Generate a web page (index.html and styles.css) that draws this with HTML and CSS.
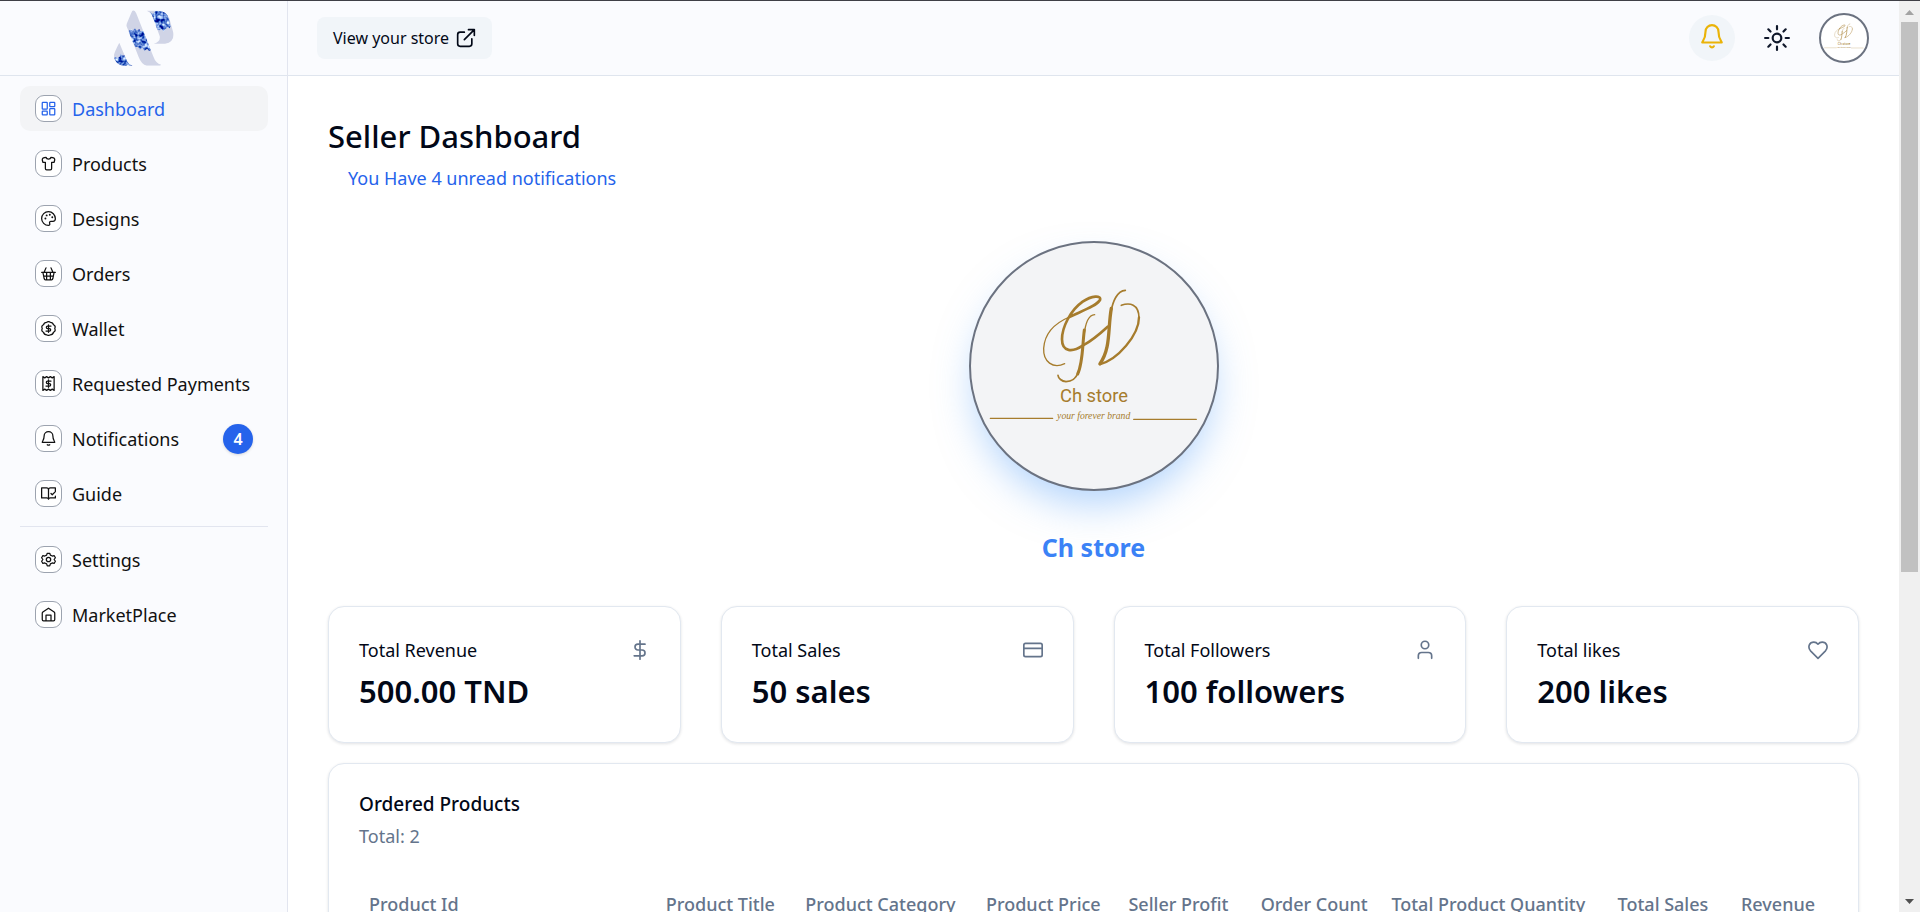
FILE: index.html
```html
<!DOCTYPE html>
<html lang="en">
<head>
<meta charset="utf-8">
<title>Seller Dashboard</title>
<link rel="stylesheet" href="styles.css">
</head>
<body>
<div class="app">
  <aside class="sidebar">
    <a class="brand" href="#" aria-label="Home">
      <svg viewBox="330 20 200 190" aria-hidden="true">
        <defs>
          <clipPath id="mark">
            <path d="M399 30Q404 30 408 39L460 170Q467 190 483 194L480 197H440Q424 194 415 170L379 78Q378 73 381 67L393 38Q396 30 399 30Z"/>
            <path d="M440 31H475Q500 33 508 55L520 98Q524 125 495 131H461Q482 124 479 108L456 45Q452 36 440 31Z"/>
            <path d="M357 128L381 185Q386 194 397 197H365Q342 190 341 165Q342 157 357 128Z"/>
          </clipPath>
          <filter id="floral" x="0" y="0" width="1" height="1" color-interpolation-filters="sRGB">
            <feTurbulence type="fractalNoise" baseFrequency="0.09" numOctaves="2" seed="4"/>
            <feColorMatrix values="2.200 0 0 0 -0.750  1.900 0 0 0 -0.450  1.000 0 0 0 0.320  0 0 0 0 1"/>
            <feComposite in2="SourceGraphic" operator="in"/>
          </filter>
        </defs>
        <g clip-path="url(#mark)">
          <path fill="#d0d4e6" d="M330 20h200v190H330z"/>
          <g fill="#4a70dc" filter="url(#floral)">
            <path d="M386 92l8-5 4 5 6-8 5 7 9-4 3 7 8-4 8 10-4 6 9 3v10l8 4 4 12v14l-7 4-6-7-8 6-6-9-8 5-5-8-9 1-3-9-8-5-1-12-8-7z"/>
            <path d="M450 36l8 5 8-9 34 1 12 44-3 8-5-5-8 6-5 9-6-9-7 4-10-4-10-20z"/>
            <path d="M340 180l3-10 9 4 7-5 3-8 6 6 7-2 25 34h-60z"/>
          </g>
        </g>
      </svg>
    </a>
    <nav class="nav">
      <a class="nav-item active" href="#"><span class="nav-icon"><svg viewBox="0 0 24 24"><rect x="2" y="2" width="8" height="11" rx="1"/><rect x="14" y="2" width="8" height="7" rx="1"/><rect x="14" y="12" width="8" height="10" rx="1"/><rect x="2" y="16" width="8" height="6" rx="1"/></svg></span>Dashboard</a>
      <a class="nav-item" href="#"><span class="nav-icon"><svg viewBox="0 0 24 24"><path d="M8 2c1 4 7 4 8 0 3 0 6 1 6 4l-1 4h-4v10q0 2-2 2H9q-2 0-2-2V10H3L2 6c0-3 3-4 6-4z"/></svg></span>Products</a>
      <a class="nav-item" href="#"><span class="nav-icon"><svg viewBox="0 0 24 24"><path d="M12 1C6 1 1 6 1 12s5 11 11 11c1.500 0 2.500-1 2-2.500-1-2 0-4 2-4h3c2.500 0 4-1.500 4-4C23 6 18 1 12 1z"/><path class="dot" d="M7 12h.1M9 7h.1M14 6h.1M18 10h.1"/></svg></span>Designs</a>
      <a class="nav-item" href="#"><span class="nav-icon"><svg viewBox="0 0 24 24"><path d="M1 10h22M8 3L5 10M16 3l3 7M3 10l2 10q.5 2 2 2h10q1.500 0 2-2l2-10M4 16h16M9 10v12M15 10v12"/></svg></span>Orders</a>
      <a class="nav-item" href="#"><span class="nav-icon"><svg viewBox="0 0 24 24"><path d="M9 2q3-2 6 0 4 0 5 4 4 2 2 6 2 4-2 6-1 4-5 4-3 2-6 0-4 0-5-4-4-2-2-6-2-4 2-6 1-4 5-4z"/><path d="M16 8h-5.500a2 2 0 0 0 0 4h3a2 2 0 0 1 0 4H8M12 6v12"/></svg></span>Wallet</a>
      <a class="nav-item" href="#"><span class="nav-icon"><svg viewBox="0 0 24 24"><path d="M3 1l3 2 3-2 3 2 3-2 3 2 3-2v22l-3-2-3 2-3-2-3 2-3-2-3 2z"/><path d="M16 8h-5.500a2 2 0 0 0 0 4h3a2 2 0 0 1 0 4H8M12 6v12"/></svg></span>Requested Payments</a>
      <a class="nav-item" href="#"><span class="nav-icon"><svg viewBox="0 0 24 24"><path d="M5 8a7 7 0 0 1 14 0c0 7 3 8 3 10H2c0-2 3-3 3-10M10 22q2 1.500 4 0"/></svg></span>Notifications<span class="count">4</span></a>
      <a class="nav-item" href="#"><span class="nav-icon"><svg viewBox="0 0 24 24"><path d="M12 21V6q0-3-3-3H1v16h8q3 0 3 2 0-2 3-2h8v-3M12 6q0-3 3-3h8v5M16 12l2 2 5-5"/></svg></span>Guide</a>
      <hr class="nav-rule">
      <a class="nav-item" href="#"><span class="nav-icon"><svg viewBox="0 0 24 24"><path d="M10 2h4l1 3 3 1.500 3-.8 2 3.500-2 2.800 2 2.800-2 3.500-3-.8L15 19l-1 3h-4l-1-3-3-1.500-3 .8-2-3.500L3 12 1 9.200l2-3.500 3 .8L9 5z"/><circle cx="12" cy="12" r="3.500"/></svg></span>Settings</a>
      <a class="nav-item" href="#"><span class="nav-icon"><svg viewBox="0 0 24 24"><path d="M2 10q0-1 1-2l9-6 9 6q1 1 1 2v10q0 2-2 2H4q-2 0-2-2zM8 22v-9h8v9"/></svg></span>MarketPlace</a>
    </nav>
  </aside>
  <div class="page">
    <header class="topbar">
      <button class="store-btn" type="button">View your store
        <svg viewBox="0 0 24 24" aria-hidden="true"><path d="M15 2h7v7M22 2L10 14M19 13v6q0 3-3 3H5q-3 0-3-3V8q0-3 3-3h5"/></svg>
      </button>
      <div class="tools">
        <button class="bell" type="button" aria-label="Notifications"><svg viewBox="0 0 24 24"><path d="M6 8a6 6 0 0 1 12 0c0 7 3 9 3 10H3c0-1 3-3 3-10M10.300 21.500a2 2 0 0 0 3.400 0"/></svg></button>
        <button class="theme" type="button" aria-label="Theme"><svg viewBox="0 0 24 24"><circle cx="12" cy="12" r="4"/><path d="M12 1v3M12 20v3M4 4l2 2M18 18l2 2M1 12h3M20 12h3M6 18l-2 2M20 4l-2 2"/></svg></button>
        <button class="avatar" type="button" aria-label="Account"><svg viewBox="90 69 738 738"><use href="#monogram"/></svg></button>
      </div>
    </header>
    <main class="content">
      <h1>Seller Dashboard</h1>
      <a class="unread" href="#">You Have 4 unread notifications</a>
      <section class="profile">
        <div class="portrait">
          <svg viewBox="90 69 738 738">
            <g id="monogram">
              <g stroke="#a67c2d">
                <path stroke-width="4" d="M371 431C336 448 306 425 308 385C311 338 345 308 385 291"/>
                <path stroke-width="8" d="M385 291C425 272 466 258 477 240C482 225 452 226 425 245C388 271 363 322 363 358C363 397 395 397 425 377C452 362 475 343 500 320"/>
                <path stroke-width="4" d="M461 284C441 285 432 315 429 350"/>
                <path stroke-width="9" d="M430 330C424 375 426 430 410 462"/>
                <path stroke-width="5" d="M413 455C402 482 388 485 375 485C362 484 352 475 351 466M553 211C528 212 515 246 510 275"/>
                <path stroke-width="10" d="M511 265C500 325 510 385 477 431"/>
                <path stroke-width="7" d="M476 433C530 420 594 345 594 292"/>
                <path stroke-width="5" d="M594 294C594 251 565 247 541 256"/>
                <path stroke-width="4" d="M148 595H335M578 598H766"/>
              </g>
              <text class="mono-name" x="459" y="545" text-anchor="middle">Ch store</text>
              <text class="mono-tag" x="458" y="598" text-anchor="middle">your forever brand</text>
            </g>
          </svg>
        </div>
        <h2>Ch store</h2>
      </section>
      <section class="stats">
        <article class="card stat"><div class="stat-head"><h3>Total Revenue</h3><svg viewBox="0 0 24 24"><path d="M12 1v22M18 5H9.500a3.500 3.500 0 0 0 0 7h5a3.500 3.500 0 0 1 0 7H5"/></svg></div><p>500.00 TND</p></article>
        <article class="card stat"><div class="stat-head"><h3>Total Sales</h3><svg viewBox="0 0 24 24"><rect x="1" y="4" width="22" height="16" rx="2"/><path d="M1 10h22"/></svg></div><p>50 sales</p></article>
        <article class="card stat"><div class="stat-head"><h3>Total Followers</h3><svg viewBox="0 0 24 24"><circle cx="12" cy="6" r="4.500"/><path d="M4 22v-3q0-4 4-4h8q4 0 4 4v3"/></svg></div><p>100 followers</p></article>
        <article class="card stat"><div class="stat-head"><h3>Total likes</h3><svg viewBox="0 0 24 24"><path d="M12 22L3 13C-1 8 2 2.500 7 2.500q3 0 5 2.500 2-2.500 5-2.500c5 0 8 5.500 4 10.500z"/></svg></div><p>200 likes</p></article>
      </section>
      <section class="card orders">
        <h3>Ordered Products</h3>
        <p>Total: 2</p>
        <table>
          <colgroup><col class="c-id"><col class="c-title"><col class="c-cat"><col class="c-price"><col class="c-profit"><col class="c-count"><col class="c-qty"><col class="c-sales"><col class="c-rev"></colgroup>
          <thead><tr><th>Product Id</th><th>Product Title</th><th>Product Category</th><th>Product Price</th><th>Seller Profit</th><th>Order Count</th><th>Total Product Quantity</th><th>Total Sales</th><th>Revenue</th></tr></thead>
        </table>
      </section>
    </main>
  </div>
  <div class="scrollbar" aria-hidden="true">
    <svg viewBox="0 0 21 21"><path fill="#a3a3a3" d="M6 14l4.500-5 4.500 5z"/></svg>
    <div class="track"><div class="thumb"></div></div>
    <svg viewBox="0 0 21 21"><path fill="#505050" d="M6 8l4.500 5L15 8z"/></svg>
  </div>
</div>
</body>
</html>
```
FILE: styles.css
```css
* { box-sizing: border-box; margin: 0; }
body {
  font-family: "Noto Sans", "Open Sans", sans-serif;
  font-size: 18px;
  line-height: 28px;
  color: #020817;
  background: #fff;
  overflow: hidden;
}
a { color: inherit; text-decoration: none; }
button { font: inherit; color: inherit; border: 0; padding: 0; background: none; }
svg { fill: none; stroke: currentColor; stroke-width: 2; stroke-linecap: round; stroke-linejoin: round; flex: none; }
.app {
  display: grid;
  grid-template-columns: 288px minmax(0, 1fr) 21px;
  height: 100vh;
  border-top: 1px solid #3f3f46;
}
.sidebar { background: #fafbfe; border-right: 1px solid #e2e5ef; }
.brand {
  display: flex;
  align-items: center;
  justify-content: center;
  height: 75px;
  border-bottom: 1px solid #dfe5ee;
}
.brand svg { width: 67px; height: 63px; stroke: none; }
.nav { display: flex; flex-direction: column; gap: 10px; padding: 10px 19px 10px 20px; }
.nav-item {
  display: flex;
  align-items: center;
  gap: 10px;
  height: 45px;
  padding: 0 15px;
  border-radius: 10px;
  color: #111;
  white-space: nowrap;
}
.nav-item.active { background: #f3f4f6; color: #2563eb; }
.nav-icon {
  display: grid;
  place-items: center;
  flex: none;
  width: 27px;
  height: 27px;
  border: 1px solid #9ca3af;
  border-radius: 9px;
  background: #fff;
}
.nav-icon svg { width: 15px; height: 15px; }
.nav-icon .dot { stroke-width: 3; }
.count {
  display: grid;
  place-items: center;
  width: 30px;
  height: 30px;
  margin-left: auto;
  border-radius: 50%;
  background: #2563eb;
  color: #fff;
  font-size: 16px;
  font-weight: 600;
  box-shadow: 0 1px 3px rgba(0, 0, 0, .15);
}
.nav-rule { width: 100%; height: 1px; border: 0; background: #e2e5ef; }
.page { display: flex; flex-direction: column; min-width: 0; overflow: hidden; }
.topbar {
  display: flex;
  flex: none;
  align-items: center;
  justify-content: space-between;
  height: 75px;
  padding: 0 30px 0 29px;
  background: #fafbfe;
  border-bottom: 1px solid #dfe5ee;
}
.store-btn {
  display: flex;
  align-items: center;
  gap: 7px;
  height: 42px;
  padding: 0 16px;
  border-radius: 8px;
  background: #f1f5f9;
  font-size: 16px;
}
.store-btn svg { width: 20px; height: 20px; }
.tools { display: flex; align-items: center; gap: 29px; }
.bell { display: grid; place-items: center; width: 46px; height: 46px; border-radius: 50%; background: #f1f5f9; color: #eab308; }
.bell svg { width: 26px; height: 26px; margin-bottom: 4px; }
.theme { display: grid; place-items: center; width: 26px; height: 26px; color: #0f172a; }
.theme svg { width: 26px; height: 26px; }
.avatar { width: 50px; height: 50px; border: 2px solid #6b7280; border-radius: 50%; background: #fff; overflow: hidden; }
.avatar svg, .portrait svg { display: block; width: 100%; height: 100%; }
.mono-name, .mono-tag { fill: #a67c2d; stroke: none; }
.mono-name { font-family: Roboto, sans-serif; font-size: 55px; }
.mono-tag { font-family: "Liberation Serif", serif; font-size: 29px; font-style: italic; font-weight: 400; }
.content { padding: 40px; }
h1 { font-size: 31px; line-height: 40px; font-weight: 500; }
.unread { display: inline-block; margin: 8px 0 0 20px; color: #2563eb; }
.profile { display: flex; flex-direction: column; align-items: center; gap: 37px; padding: 49px 0 40px; }
.portrait {
  width: 250px;
  height: 250px;
  border: 2px solid #6b7280;
  border-radius: 50%;
  background: #f3f4f6;
  box-shadow: 0 20px 40px -8px rgba(96, 165, 250, .5);
}
h2 { font-size: 25px; line-height: 38px; font-weight: 700; color: #3b82f6; }
.stats { display: grid; grid-template-columns: repeat(4, minmax(0, 1fr)); gap: 40px; }
.card { border: 1px solid #e2e8f0; border-radius: 16px; background: #fff; box-shadow: 0 1px 3px rgba(15, 23, 42, .12); }
.stat { padding: 29px 30px; height: 137px; }
.stat-head { display: flex; align-items: center; justify-content: space-between; }
.stat-head h3 { font-size: 18px; line-height: 28px; font-weight: 400; }
.stat-head svg { width: 20px; height: 20px; color: #64748b; }
.stat p { margin-top: 7px; font-size: 31px; line-height: 40px; font-weight: 600; }
.orders { margin-top: 20px; padding: 24px 30px; }
.orders h3 { font-size: 19px; line-height: 32px; font-weight: 500; }
.orders p { margin-top: 2px; color: #64748b; }
table { width: 100%; margin-top: 24px; border-collapse: collapse; table-layout: fixed; }
th { height: 60px; padding: 0 0 0 10px; text-align: left; white-space: nowrap; font-size: 18px; font-weight: 500; color: #64748b; }
.c-id { width: 20.2%; }
.c-title { width: 9.5%; }
.c-cat { width: 12.3%; }
.c-price { width: 9.7%; }
.c-profit { width: 9%; }
.c-count { width: 8.9%; }
.c-qty { width: 15.4%; }
.c-sales { width: 8.4%; }
.c-rev { width: 6.6%; }
.scrollbar { display: flex; flex-direction: column; background: #f0f0f0; }
.scrollbar svg { width: 21px; height: 21px; stroke: none; }
.track { flex: 1; padding: 0 2px; }
.thumb { height: 63.3%; background: #c1c1c1; }
```
